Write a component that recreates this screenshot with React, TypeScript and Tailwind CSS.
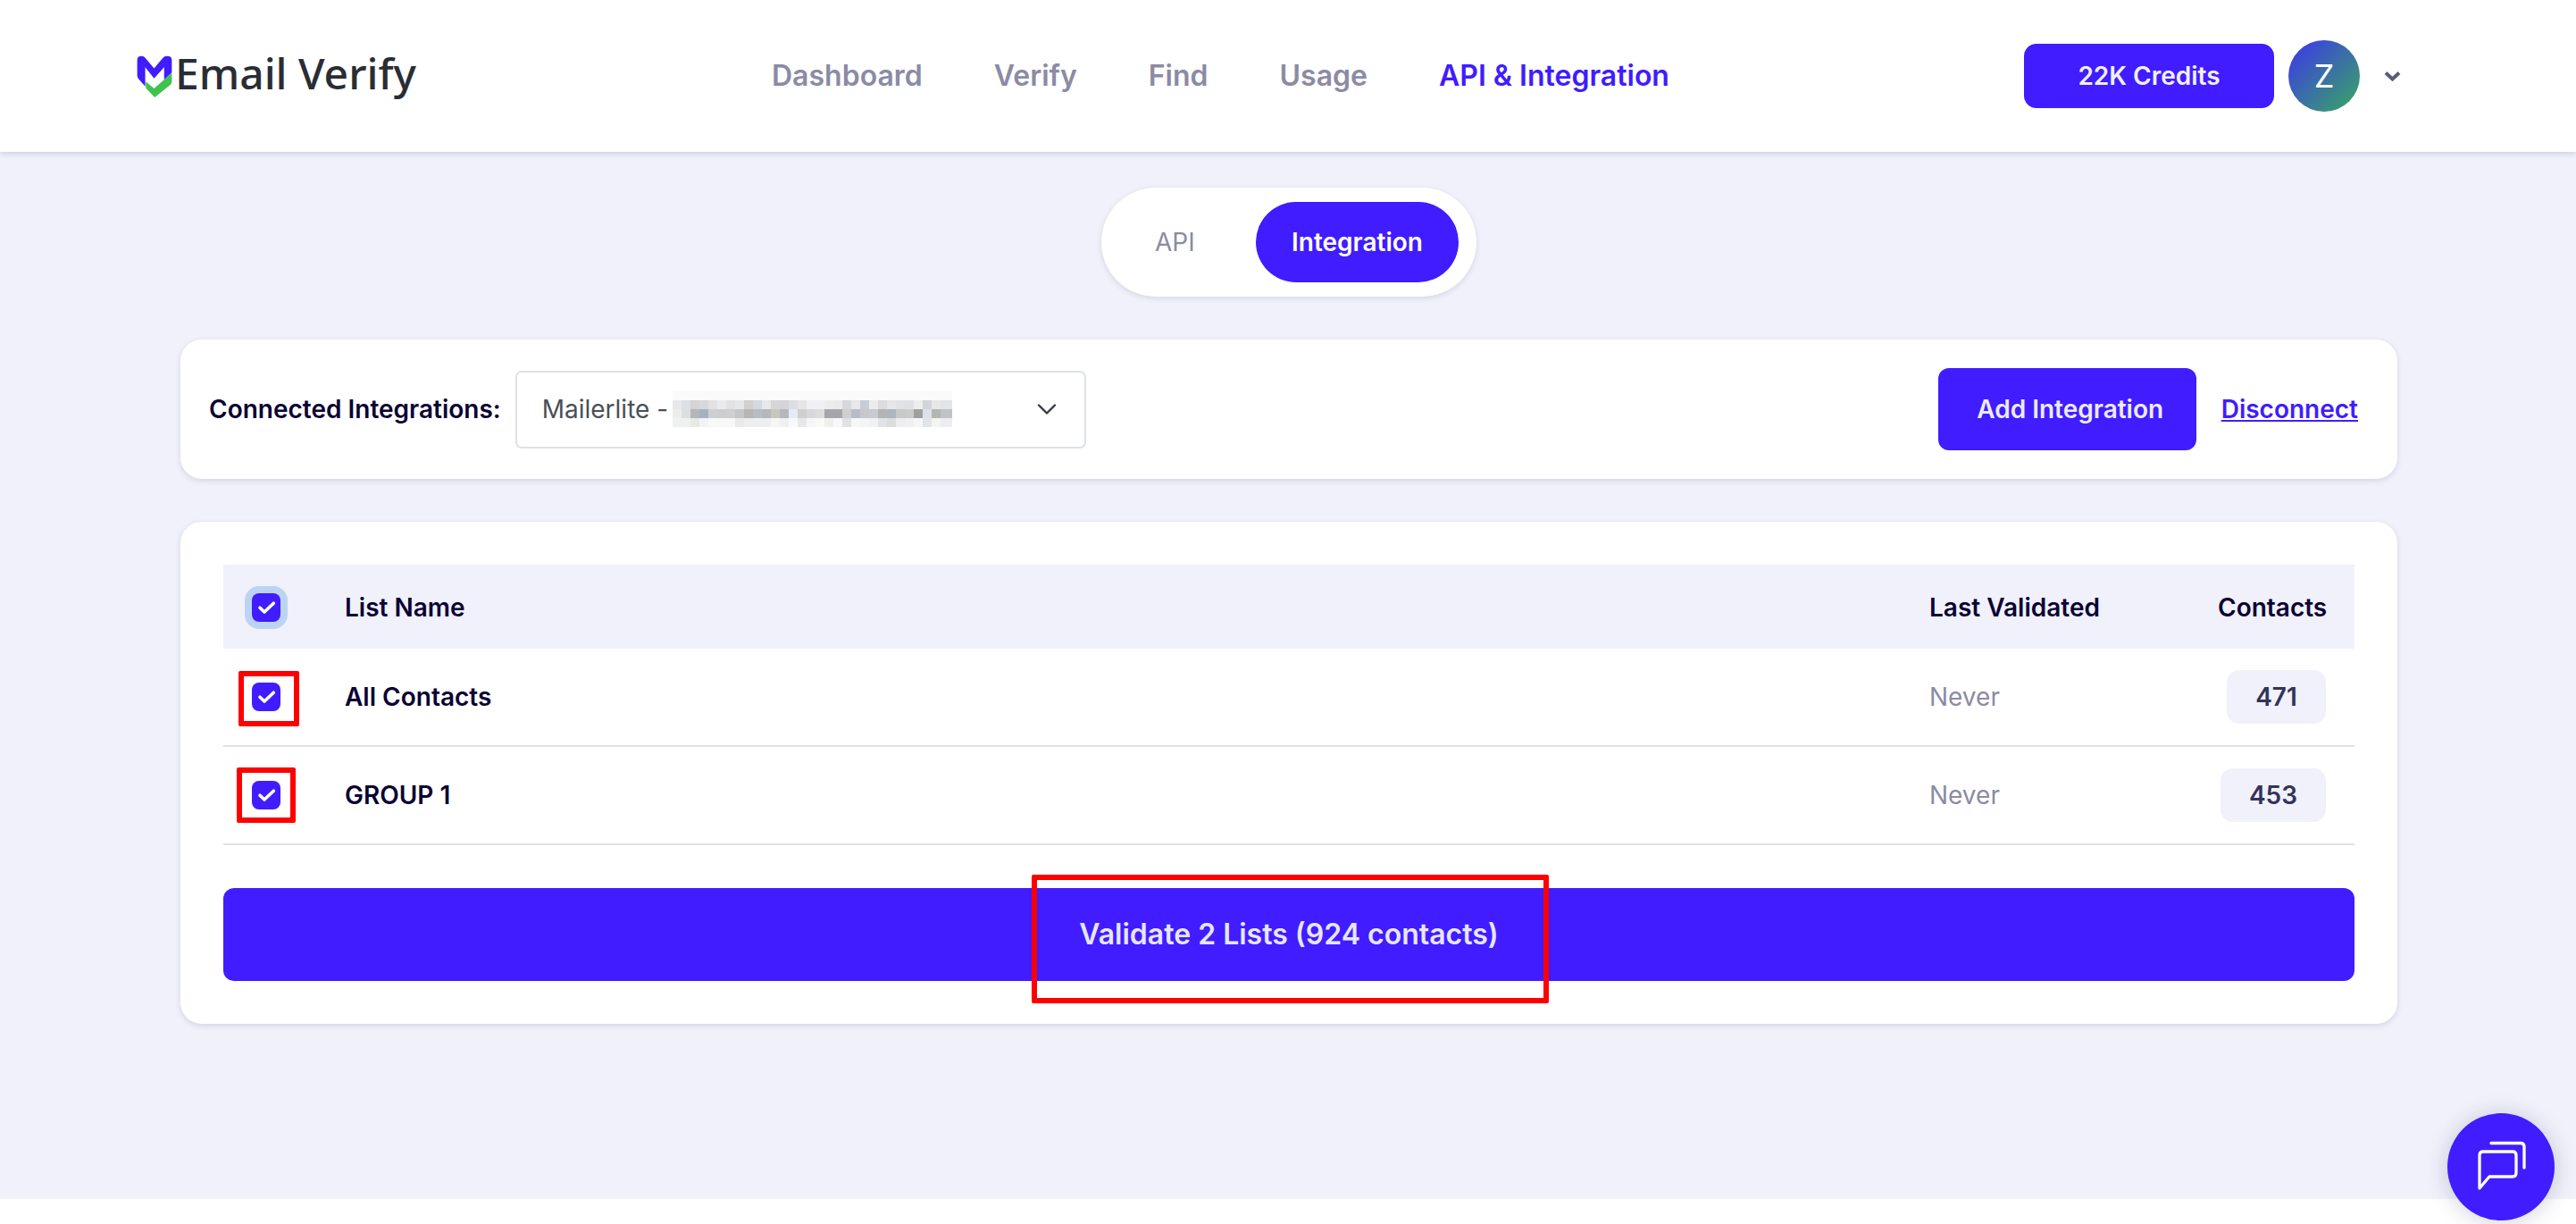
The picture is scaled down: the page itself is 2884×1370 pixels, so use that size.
import React from "react";

const R1 = "e8e8e8 dcdfe4 d4d4d6 d6d8de e2e2e4 eaebee e2e2e4 e6e8e8 d2d0ce d4d8e2 e6e8ea d6d6d6 d4d4d8 dcdee2 e6e6e6 f0f1f3 f0f1f3 ececec eaeaea d6d8de e8e8e8 c8ccd6 ececee dcdcdc e6e6e8 e0e2e8 dfe1e6 ededed d2d4d8 e8e8e8 e2e4e8".split(" ");
const R2 = "ededeb dcdfe0 b6b6b6 a8b0c0 cdcfd2 cdcdcf cfcfcf c4c6c8 b8b6b4 b8bcc6 b4b8bc c8c6c0 b6b6bc e6eaf6 cfcfcf d8d8dc dcdcdc a6a6aa a6a6aa cfcfcf b8bcc8 c8c8ca c8cad0 b4b4b6 aeb4c0 c8c8ca cacaca 9f9f9f dde2e8 b4b6b6 c0c2c6".split(" ");
const R3 = "f0f0f0 eef0f2 e8e8e6 f2f3f5 f8f9f9 f8f8f8 f7f8f8 eaeaea eeeeee edeeef eceef2 f6f6f4 f0f0f0 f8f9fc e8e8e8 f5f6f8 f9f9f6 eef0f0 f7f8fa e2e2e6 f6f7f7 f4f5f5 f0f2f2 e0e2e6 dcdcde ecedf0 f0f0f2 f6f6f8 e2e4e8 f4f4f0 ecedf0".split(" ");

function Redaction() {
  return (
    <svg width="313" height="40" viewBox="0 0 313 40" className="ml-[5px] shrink-0" shapeRendering="crispEdges">
      <rect width="313" height="10" fill="#fafafa" />
      {[R1, R2, R3].map((row, y) =>
        row.map((c, x) => (
          <rect key={`${y}-${x}`} x={x * 10} y={(y + 1) * 10} width={x === 30 ? 13 : 10} height="10" fill={`#${c}`} />
        ))
      )}
    </svg>
  );
}

function Logo() {
  return (
    <div className="flex items-center w-[711px] shrink-0">
      <svg width="40" height="47" viewBox="43 60 117 142" className="shrink-0">
        <path
          fill="#401cff"
          d="M43 75Q43 62 58 62Q66 62 70 68L100 104L130 68Q134 62 144 62Q160 62 160 75L160 118L134 142L134 100L100 138L70 100L70 165L48 140Q43 134 43 128Z"
        />
        <path fill="#3fc34f" d="M72 148L100 172L160 120L160 148Q160 154 155 160L102 202L72 170Z" />
      </svg>
      <span className="ml-[3px] pb-[6px] text-[48px] leading-none font-medium text-[#2a2d33] [font-family:'Noto_Sans',sans-serif]">
        Email Verify
      </span>
    </div>
  );
}

function Check({ ring = false }: { ring?: boolean }) {
  return (
    <span
      className={`flex h-8 w-8 items-center justify-center rounded-lg bg-[#401cff] ${
        ring ? "shadow-[0_0_0_8px_#bcd4f4]" : ""
      }`}
    >
      <svg width="32" height="32" viewBox="0 0 32 32" fill="none">
        <path d="M9 16.2L14 21L24.3 11.2" stroke="#fff" strokeWidth="3.6" strokeLinecap="round" strokeLinejoin="round" />
      </svg>
    </span>
  );
}

function Row({
  name,
  count,
  badgeW,
  red,
}: {
  name: string;
  count: string;
  badgeW: string;
  red: string;
}) {
  return (
    <div className="relative flex h-[110px] items-center border-b-2 border-[#dee2e6]">
      <div className="w-[136px] pl-8 shrink-0">
        <Check />
      </div>
      <div className="flex-1 text-[28px] font-semibold text-[#0b0333]">{name}</div>
      <div className="w-[323px] text-[28px] text-[#8b8ba5]">Never</div>
      <div className="flex w-[121px] justify-end">
        <span
          className={`flex h-[60px] items-center justify-center rounded-[14px] bg-[#f0f1fa] text-[28px] font-semibold text-[#33335a] ${badgeW}`}
        >
          {count}
        </span>
      </div>
      <div className="w-8" />
      <div className={`absolute rounded-[2px] border-[6px] border-[#ff0000] ${red}`} />
    </div>
  );
}

export default function App() {
  return (
    <div className="relative flex h-[1370px] w-full flex-col overflow-hidden bg-white [font-family:Inter,sans-serif]">
      <header className="relative z-10 flex h-[170px] shrink-0 items-center bg-white pl-[153px] pr-[196px] shadow-[0_2px_6px_rgba(60,60,110,0.2)]">
        <Logo />
        <nav className="flex items-center gap-[80px] text-[32px] font-semibold text-[#8b8ba5]">
          <span>Dashboard</span>
          <span>Verify</span>
          <span>Find</span>
          <span>Usage</span>
          <span className="text-[#401cff]">API &amp; Integration</span>
        </nav>
        <div className="ml-auto flex items-center">
          <button className="flex h-[72px] w-[280px] items-center justify-center rounded-[14px] bg-[#401cff] text-[28px] font-semibold text-[#f0f0ff]">
            22K Credits
          </button>
          <div className="ml-4 flex h-20 w-20 items-center justify-center rounded-full bg-[linear-gradient(135deg,#3d34ee,#38aa5e)] text-[36px] font-normal text-white">
            Z
          </div>
          <svg width="19" height="12" viewBox="0 0 19 12" className="ml-[27px]" fill="none">
            <path d="M2 2.5L9.5 9.5L17 2.5" stroke="#5c5c78" strokeWidth="4" />
          </svg>
        </div>
      </header>

      <main className="flex flex-1 flex-col bg-[#f0f1fa] pt-10 pl-[202px]">
        <div className="ml-[1031px] flex h-[122px] w-[420px] items-center rounded-full bg-white pl-[60px] pr-5 shadow-[0_2px_6px_rgba(60,60,110,0.14)]">
          <span className="text-[28px] text-[#8b8ba5]">API</span>
          <span className="ml-auto flex h-[90px] w-[227px] items-center justify-center rounded-full bg-[#401cff] text-[28px] font-semibold text-white">
            Integration
          </span>
        </div>

        <section className="mt-12 flex h-[156px] w-[2482px] items-center rounded-[24px] bg-white pl-[32px] pr-[44px] shadow-[0_2px_6px_rgba(60,60,110,0.16)]">
          <span className="text-[28px] font-semibold text-[#0b0333]">Connected Integrations:</span>
          <div className="ml-[16px] flex h-[87px] w-[639px] items-center rounded-[7px] border-2 border-[#dee2e6] pl-[28px] pr-[30px] text-[28px] text-[#495057]">
            <span>Mailerlite -</span>
            <Redaction />
            <svg width="24" height="24" viewBox="0 0 24 24" fill="none" className="ml-auto">
              <path d="M3 7.5L12 16.5L21 7.5" stroke="#343a40" strokeWidth="2.4" strokeLinecap="round" strokeLinejoin="round" />
            </svg>
          </div>
          <button className="ml-auto flex h-[92px] w-[289px] items-center justify-center rounded-xl bg-[#401cff] pl-[7px] text-[28px] font-semibold text-[#ecebff]">
            Add Integration
          </button>
          <a className="ml-[28px] text-[28px] font-semibold text-[#401cff] underline">Disconnect</a>
        </section>

        <section className="mt-12 w-[2482px] rounded-[24px] bg-white p-12 shadow-[0_2px_6px_rgba(60,60,110,0.16)]">
          <div className="flex h-[94px] items-center bg-[#f0f1fa] pt-[2px] text-[28px] font-semibold text-[#0b0333]">
            <div className="w-[136px] pl-8 shrink-0">
              <Check ring />
            </div>
            <div className="flex-1">List Name</div>
            <div className="w-[323px]">Last Validated</div>
            <div className="w-[121px] text-right">Contacts</div>
            <div className="w-8" />
          </div>
          <Row name="All Contacts" count="471" badgeW="w-[111px]" red="left-[17px] top-[25px] h-[62px] w-[68px]" />
          <Row name="GROUP 1" count="453" badgeW="w-[118px]" red="left-[15px] top-[23px] h-[62px] w-[66px]" />
          <div className="relative mt-12 flex h-[104px] items-center justify-center rounded-xl bg-[#401cff] text-[32px] font-semibold text-[#e6e6ff]">
            Validate 2 Lists (924 contacts)
            <div className="absolute left-[905px] top-[-15px] h-[144px] w-[579px] rounded-[2px] border-[6px] border-[#ff0000]" />
          </div>
        </section>
      </main>

      <footer className="h-[28px] shrink-0 bg-white" />

      <button className="absolute left-[2740px] top-[1246px] z-20 flex h-[120px] w-[120px] items-center justify-center rounded-full bg-[#401cff] shadow-[0_2px_24px_rgba(40,40,90,0.22)]">
        <svg width="80" height="80" viewBox="0 0 80 80" fill="none">
          <path
            d="M16 64V27Q16 23 20 23H53Q57 23 57 27V47Q57 51 53 51H27L16 64Z"
            stroke="#fff"
            strokeWidth="3.3"
            strokeLinecap="round"
            strokeLinejoin="round"
          />
          <path d="M29 13.5H62Q66 13.5 66 17.5V41" stroke="#fff" strokeWidth="3.3" strokeLinecap="round" />
        </svg>
      </button>
    </div>
  );
}
